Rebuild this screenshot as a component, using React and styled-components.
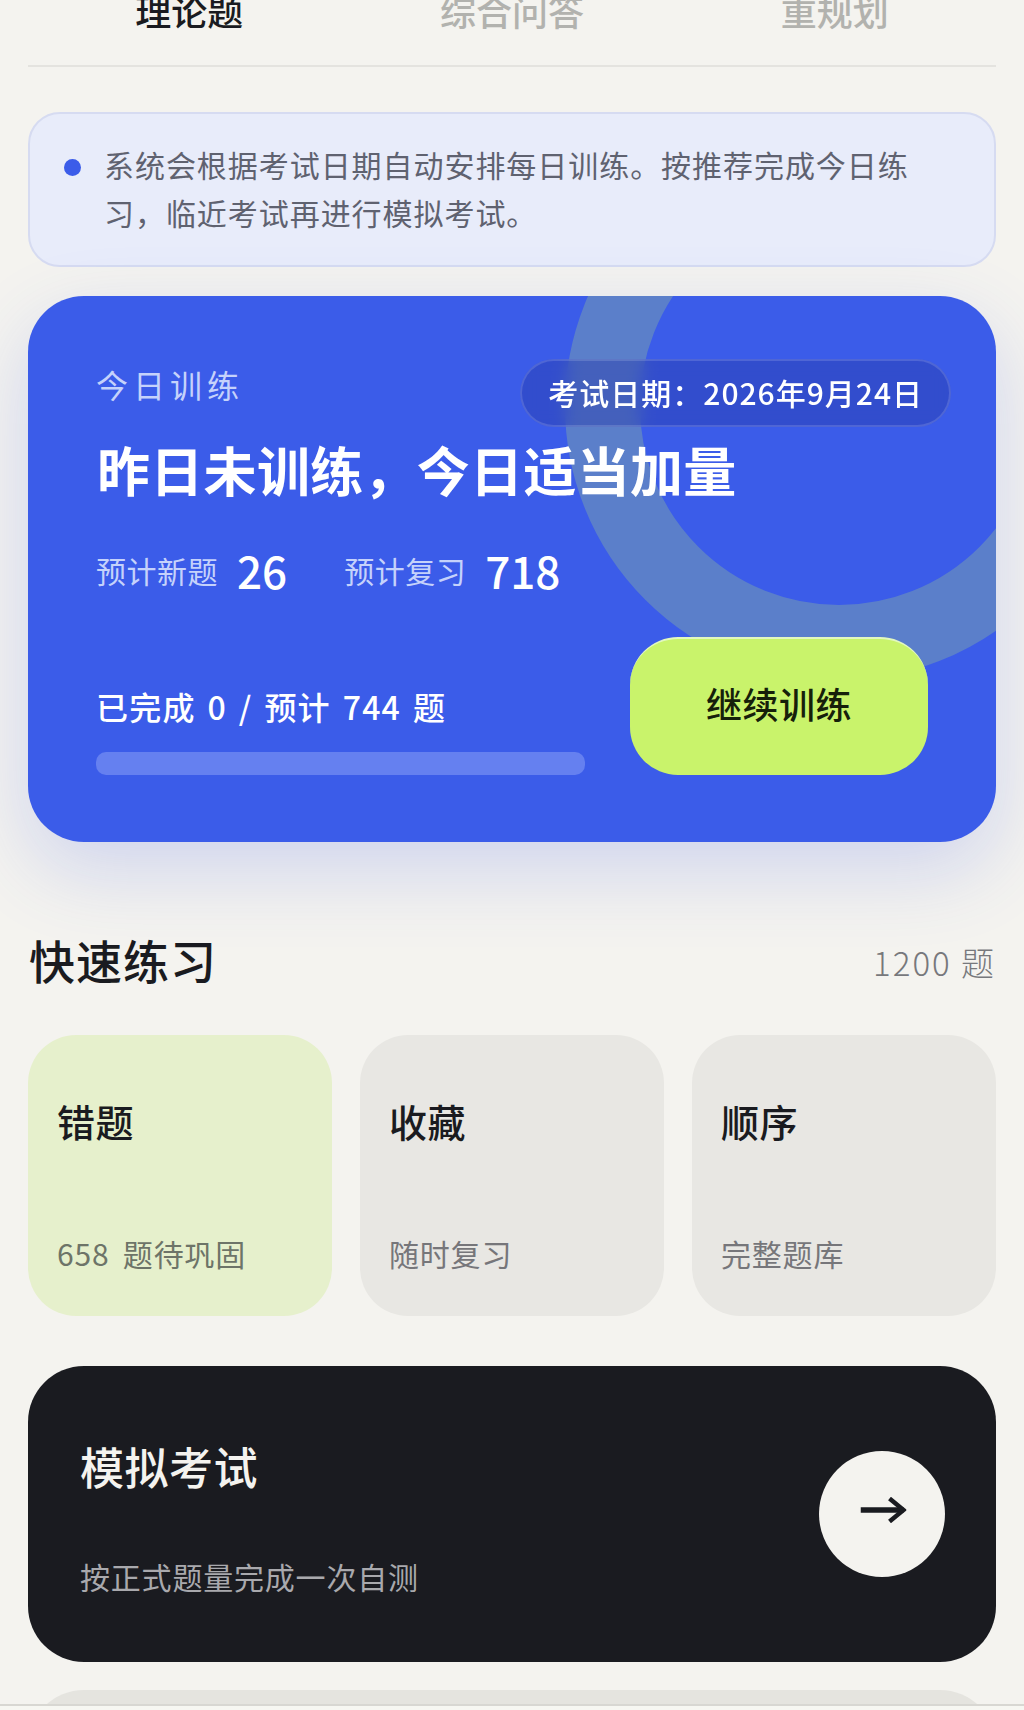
import React from 'react';
import styled, { createGlobalStyle } from 'styled-components';

const GlobalStyle = createGlobalStyle`
    html, body {
        margin : 0;
        padding : 0;
        background : #f4f3ef;
    }
    * {
        box-sizing : border-box;
    }
`;

const FONT = `'Noto Sans CJK SC', 'Noto Sans', sans-serif`;

// full width punctuation kept as escapes
const NOTICE_TEXT = '系统会根据考试日期自动安排每日训练。按推荐完成今日练习\uFF0C临近考试再进行模拟考试。';
const EXAM_DATE = '考试日期\uFF1A2026年9月24日';
const PLAN_TITLE = '昨日未训练\uFF0C今日适当加量';

const Page = styled.div`
    width : 1024px;
    height : 1710px;
    overflow : hidden;
    position : relative;
    padding : 0 28px;
    font-family : ${FONT};
    background : #f4f3ef;
`;

const Tabs = styled.div`
    display : grid;
    grid-template-columns : repeat(3, 1fr);
    height : 67px;
    border-bottom : 2px solid #e4e3df;
`;

const Tab = styled.div`
    text-align : center;
    font-size : 36px;
    line-height : 50px;
    margin-top : -15px;
    font-weight : 500;
    color : ${(props) => (props.$active ? '#1a1b20' : '#b2b2ae')};
`;

const Notice = styled.div`
    display : flex;
    align-items : flex-start;
    margin-top : 45px;
    height : 155px;
    padding : 26px 60px 0 34px;
    border : 2px solid #d6dbf1;
    border-radius : 32px;
    background : #e8ecfa;
`;

const NoticeDot = styled.span`
    flex : none;
    width : 17px;
    height : 17px;
    margin-top : 19px;
    margin-right : 23px;
    border-radius : 50%;
    background : #3b5ce9;
`;

const NoticeText = styled.div`
    font-size : 30px;
    line-height : 48px;
    letter-spacing : 0.95px;
    color : #5f6270;
`;

const PlanCard = styled.div`
    position : relative;
    margin-top : 29px;
    height : 546px;
    padding : 54px 68px 67px 68px;
    border-radius : 56px;
    background : #3b5ce9;
    box-shadow : 0 28px 80px rgba(59, 92, 233, 0.2);
`;

const RingClip = styled.div`
    position : absolute;
    inset : 0;
    overflow : hidden;
    border-radius : 56px;
`;

const Ring = styled.div`
    position : absolute;
    left : 537px;
    top : -164px;
    width : 548px;
    height : 548px;
    border : 75px solid #5b7fca;
    border-radius : 50%;
`;

const PlanContent = styled.div`
    position : relative;
    display : flex;
    flex-direction : column;
    height : 100%;
`;

const PlanTop = styled.div`
    display : flex;
    justify-content : space-between;
    align-items : flex-start;
    margin-right : -23px;
`;

const PlanLabel = styled.div`
    margin-top : 11px;
    font-size : 32px;
    line-height : 46px;
    letter-spacing : 5px;
    color : #c5d2fb;
`;

const DatePill = styled.div`
    margin-top : 9px;
    height : 68px;
    padding : 0 26px 3px;
    display : flex;
    align-items : center;
    border : 2px solid rgba(255, 255, 255, 0.14);
    border-radius : 34px;
    background : rgba(40, 60, 170, 0.45);
    backdrop-filter : blur(8px);
    font-size : 30px;
    letter-spacing : 1px;
    font-weight : 500;
    color : #ffffff;
    white-space : nowrap;
`;

const PlanTitle = styled.div`
    margin-top : 6px;
    margin-left : 1px;
    font-size : 53px;
    line-height : 72px;
    letter-spacing : 0.3px;
    font-weight : 600;
    color : #ffffff;
`;

const Stats = styled.div`
    display : flex;
    align-items : center;
    gap : 57px;
    margin-top : 35px;
`;

const Stat = styled.div`
    display : flex;
    align-items : center;
    gap : 19px;
    font-size : 30px;
    line-height : 60px;
    letter-spacing : 0.5px;
    color : #c5d2fb;
`;

const StatValue = styled.span`
    font-size : 44px;
    font-weight : 500;
    letter-spacing : 0;
    color : #ffffff;
`;

const PlanBottom = styled.div`
    display : flex;
    justify-content : space-between;
    align-items : flex-end;
    margin-top : auto;
`;

const Progress = styled.div`
    width : 489px;
`;

const ProgressText = styled.div`
    font-size : 32px;
    line-height : 46px;
    letter-spacing : 1.2px;
    word-spacing : 3.5px;
    font-weight : 500;
    color : #ffffff;
    white-space : nowrap;
`;

const ProgressBar = styled.div`
    height : 23px;
    margin-top : 23px;
    border-radius : 10px;
    background : #6580f0;
`;

const ContinueButton = styled.button`
    width : 298px;
    height : 138px;
    padding : 0 0 8px;
    border : 0;
    border-top : 2px solid #e2f8c0;
    border-radius : 48px;
    background : #c9f36b;
    font-family : ${FONT};
    font-size : 36px;
    letter-spacing : 0.5px;
    font-weight : 500;
    color : #16200a;
`;

const SectionHeader = styled.div`
    display : flex;
    justify-content : space-between;
    align-items : center;
    margin-top : 88px;
    height : 66px;
`;

const SectionTitle = styled.div`
    margin-top : -8px;
    margin-left : 1px;
    font-size : 46px;
    letter-spacing : 1px;
    font-weight : 500;
    color : #1a1b20;
`;

const SectionCount = styled.div`
    margin-top : -2px;
    font-size : 33px;
    letter-spacing : 2px;
    font-weight : 300;
    color : #77787c;
`;

const QuickGrid = styled.div`
    display : grid;
    grid-template-columns : repeat(3, 1fr);
    gap : 28px;
    margin-top : 39px;
`;

const QuickCard = styled.div`
    display : flex;
    flex-direction : column;
    justify-content : space-between;
    height : 281px;
    padding : 59px 20px 41px 29px;
    border-radius : 48px;
    background : ${(props) => (props.$accent ? '#e6f0cc' : '#e8e7e3')};
`;

const QuickTitle = styled.div`
    font-size : 38px;
    line-height : 54px;
    letter-spacing : 0.5px;
    font-weight : 500;
    color : #1a1b20;
`;

const QuickSub = styled.div`
    font-size : 30px;
    line-height : 44px;
    letter-spacing : 0.8px;
    word-spacing : 6px;
    color : ${(props) => (props.$accent ? '#6d7468' : '#76767a')};
`;

const ExamCard = styled.div`
    display : flex;
    justify-content : space-between;
    align-items : center;
    margin-top : 50px;
    height : 296px;
    padding : 0 51px 0 52px;
    border-radius : 56px;
    background : #1a1b20;
`;

const ExamText = styled.div`
    padding-top : 5px;
`;

const ExamTitle = styled.div`
    font-size : 44px;
    line-height : 62px;
    letter-spacing : 0.5px;
    font-weight : 500;
    color : #f4f3ef;
`;

const ExamSub = styled.div`
    margin-top : 57px;
    font-size : 30px;
    line-height : 44px;
    letter-spacing : 0.8px;
    color : #a9a9ad;
`;

const ArrowCircle = styled.div`
    display : flex;
    align-items : center;
    justify-content : center;
    width : 126px;
    height : 126px;
    border-radius : 50%;
    background : #f4f3ef;
`;

const ArrowIcon = styled.svg`
    transform : translate(1.5px, -4px);
`;

const NextCard = styled.div`
    margin-top : 28px;
    height : 120px;
    border-radius : 56px;
    background : #e5e4df;
`;

const BottomBar = styled.div`
    position : absolute;
    left : 0;
    right : 0;
    bottom : 0;
    height : 6px;
    border-top : 2px solid #d8d7d2;
    background : #f7f7f2;
`;

const quickItems = [
    { title : '错题', sub : '658 题待巩固', accent : true },
    { title : '收藏', sub : '随时复习' },
    { title : '顺序', sub : '完整题库' },
];

const App = () => {
    return (
        <Page>
            <GlobalStyle />
            <Tabs>
                <Tab $active>理论题</Tab>
                <Tab>综合问答</Tab>
                <Tab>重规划</Tab>
            </Tabs>

            <Notice>
                <NoticeDot />
                <NoticeText>{NOTICE_TEXT}</NoticeText>
            </Notice>

            <PlanCard>
                <RingClip>
                    <Ring />
                </RingClip>
                <PlanContent>
                    <PlanTop>
                        <PlanLabel>今日训练</PlanLabel>
                        <DatePill>{EXAM_DATE}</DatePill>
                    </PlanTop>
                    <PlanTitle>{PLAN_TITLE}</PlanTitle>
                    <Stats>
                        <Stat>预计新题 <StatValue>26</StatValue></Stat>
                        <Stat>预计复习 <StatValue>718</StatValue></Stat>
                    </Stats>
                    <PlanBottom>
                        <Progress>
                            <ProgressText>已完成 0 / 预计 744 题</ProgressText>
                            <ProgressBar />
                        </Progress>
                        <ContinueButton>继续训练</ContinueButton>
                    </PlanBottom>
                </PlanContent>
            </PlanCard>

            <SectionHeader>
                <SectionTitle>快速练习</SectionTitle>
                <SectionCount>1200 题</SectionCount>
            </SectionHeader>

            <QuickGrid>
                {
                    quickItems.map((item) => (
                        <QuickCard key = {item.title} $accent = {item.accent}>
                            <QuickTitle>{item.title}</QuickTitle>
                            <QuickSub $accent = {item.accent}>{item.sub}</QuickSub>
                        </QuickCard>
                    ))
                }
            </QuickGrid>

            <ExamCard>
                <ExamText>
                    <ExamTitle>模拟考试</ExamTitle>
                    <ExamSub>按正式题量完成一次自测</ExamSub>
                </ExamText>
                <ArrowCircle>
                    <ArrowIcon width = "46" height = "26" viewBox = "0 0 46 26" fill = "none" stroke = "#1a1b20">
                        <path d = "M0 13H43" strokeWidth = "5.5" />
                        <path d = "M29 1.5L43 13L29 24.5" strokeWidth = "4.5" />
                    </ArrowIcon>
                </ArrowCircle>
            </ExamCard>

            <NextCard />
            <BottomBar />
        </Page>
    );
};

export default App;
